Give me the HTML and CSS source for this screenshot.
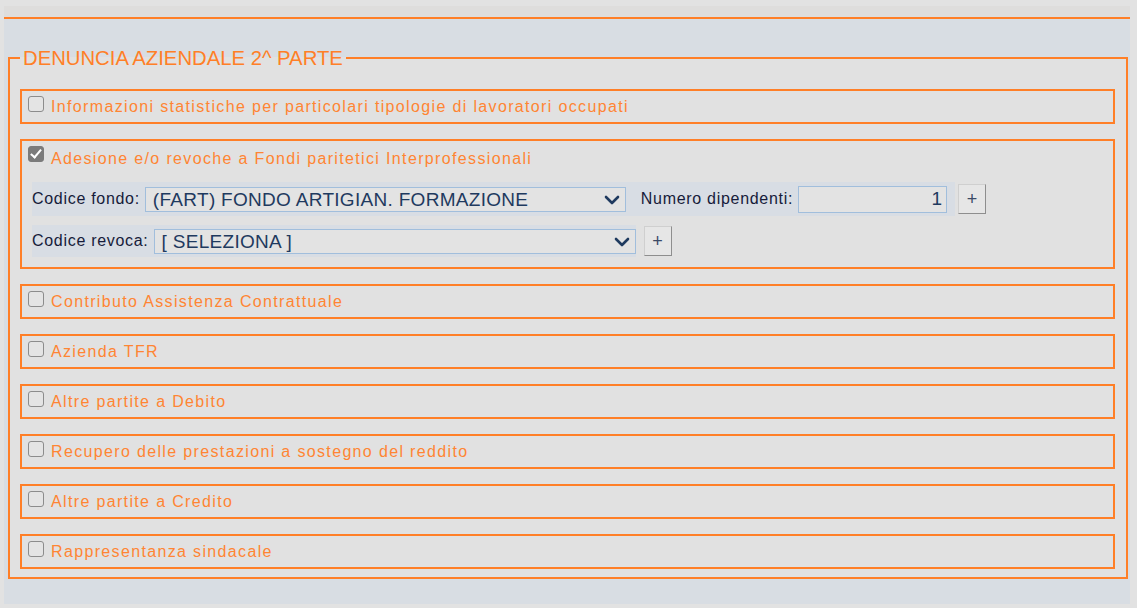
FILE: index.html
```html
<!DOCTYPE html>
<html lang="it">
	<head>
		<meta charset="utf-8" />
		<title>Denuncia aziendale 2^ parte</title>
		<link rel="stylesheet" href="styles.css">
	</head>
	<body>
		<div class="panel">
			<div class="panel-top"></div>
			<fieldset class="section">
				<legend>DENUNCIA AZIENDALE 2^ PARTE</legend>

				<div class="box">
					<label class="box-title"><input type="checkbox"> Informazioni statistiche per particolari tipologie di lavoratori occupati</label>
				</div>

				<div class="box box-open">
					<label class="box-title"><input type="checkbox" checked disabled> Adesione e/o revoche a Fondi paritetici Interprofessionali</label>
					<div class="row">
						<div class="fields fields-wide">
							<span class="lbl">Codice fondo:</span>
							<span class="select-wrap sel-fondo">
								<select>
									<option>(FART) FONDO ARTIGIAN. FORMAZIONE</option>
								</select>
								<svg class="chev" width="16" height="10" viewBox="0 0 16 10"><path d="M2 2l6 6 6-6" fill="none" stroke="#1f3a5f" stroke-width="2.6" stroke-linecap="round" stroke-linejoin="round"/></svg>
							</span>
							<span class="lbl lbl-num">Numero dipendenti:</span>
							<input class="num" type="text" value="1">
						</div>
						<button class="plus plus-near">+</button>
					</div>
					<div class="row">
						<div class="fields">
							<span class="lbl">Codice revoca:</span>
							<span class="select-wrap sel-revoca">
								<select>
									<option>[ SELEZIONA ]</option>
								</select>
								<svg class="chev" width="16" height="10" viewBox="0 0 16 10"><path d="M2 2l6 6 6-6" fill="none" stroke="#1f3a5f" stroke-width="2.6" stroke-linecap="round" stroke-linejoin="round"/></svg>
							</span>
						</div>
						<button class="plus">+</button>
					</div>
				</div>

				<div class="box">
					<label class="box-title"><input type="checkbox"> Contributo Assistenza Contrattuale</label>
				</div>
				<div class="box">
					<label class="box-title"><input type="checkbox"> Azienda TFR</label>
				</div>
				<div class="box">
					<label class="box-title"><input type="checkbox"> Altre partite a Debito</label>
				</div>
				<div class="box">
					<label class="box-title"><input type="checkbox"> Recupero delle prestazioni a sostegno del reddito</label>
				</div>
				<div class="box">
					<label class="box-title"><input type="checkbox"> Altre partite a Credito</label>
				</div>
				<div class="box">
					<label class="box-title"><input type="checkbox"> Rappresentanza sindacale</label>
				</div>
			</fieldset>
		</div>
	</body>
</html>
```

FILE: styles.css
```css
body {
	margin: 0;
	background: #e2e2e2;
	font-family: "Liberation Sans", Arial, sans-serif;
}

.panel {
	margin: 6px 7px 0 4px;
	height: 598px;
	box-sizing: border-box;
	background: #d8dde3;
	padding: 0 2px 0 4px;
}
.panel-top {
	height: 11px;
	margin: 0 -2px 0 -4px;
	background: #dedddc;
	border-bottom: 2px solid #ff7f27;
}

.section {
	margin: 28px 0 0 0;
	padding: 20px 11px 8px 10px;
	border: 2px solid #ff7f27;
	background: #e1e1e1;
}
.section legend {
	padding: 0 3px 0 3px;
	font-size: 20.3px;
	line-height: 22px;
	color: #ff7f27;
}

.box {
	height: 35px;
	box-sizing: border-box;
	border: 2px solid #ff7f27;
	padding: 5px 10px 0 6px;
	margin-bottom: 15px;
}
.box:last-child {
	margin-bottom: 0;
}
.box-open {
	height: 130px;
}

.box-title {
	display: flex;
	align-items: center;
	height: 22px;
	font-size: 16px;
	letter-spacing: 1.35px;
	color: #ff8533;
}
.box-open .box-title {
	height: 25px;
}
.box-title input {
	appearance: none;
	-webkit-appearance: none;
	width: 16px;
	height: 16px;
	margin: 0 7px 0 0;
	border: 1.5px solid #8c8c8c;
	border-radius: 3px;
	background: #e4e4e4;
	position: relative;
	flex: none;
	align-self: flex-start;
}
.box-title input:checked {
	background: #7b7b7b;
	border-color: #7b7b7b;
}
.box-title input:checked::after {
	content: "";
	position: absolute;
	left: 4px;
	top: 0px;
	width: 4px;
	height: 9px;
	border: solid #fff;
	border-width: 0 2.5px 2.5px 0;
	transform: rotate(40deg);
}

.row {
	display: flex;
	align-items: center;
	margin: 11px 0 0 4px;
}
.row + .row {
	margin-top: 9px;
}

.fields {
	display: flex;
	align-items: center;
	background: #d8dde4;
	height: 32px;
}
.fields-wide {
	height: 34px;
	padding-right: 8px;
}

.lbl {
	font-size: 16px;
	letter-spacing: 0.7px;
	color: #161b3a;
	margin-right: 5px;
}
.lbl-num {
	margin-left: 15px;
}

.select-wrap {
	position: relative;
	display: inline-block;
}
.select-wrap select {
	appearance: none;
	-webkit-appearance: none;
	height: 25px;
	box-sizing: border-box;
	border: 1px solid #a1bedc;
	background: #e3e3e3;
	color: #1f3a5f;
	font-family: "Liberation Sans", Arial, sans-serif;
	font-size: 19px;
	letter-spacing: 0.3px;
	padding: 0 0 0 7px;
	border-radius: 0;
	display: block;
}
.sel-fondo select {
	width: 481px;
}
.sel-revoca select {
	width: 482px;
}
.chev {
	position: absolute;
	right: 6px;
	top: 8px;
	pointer-events: none;
}

.num {
	width: 149px;
	height: 27px;
	box-sizing: border-box;
	border: 1px solid #a1bedc;
	background: #e3e3e3;
	color: #1f3a5f;
	font-family: "Liberation Sans", Arial, sans-serif;
	font-size: 19px;
	text-align: right;
	padding: 0 4px 0 0;
	margin: 0;
}

.plus {
	width: 28px;
	height: 30px;
	margin-left: 8px;
	padding: 0;
	background: #e6e6e6;
	border: 1px solid #cfcfcf;
	border-right-color: #8e8e8e;
	border-bottom-color: #8e8e8e;
	color: #3b4a66;
	font-family: "Liberation Sans", Arial, sans-serif;
	font-size: 18px;
	font-weight: normal;
	line-height: 1;
}
.plus-near {
	margin-left: 3px;
}
```
